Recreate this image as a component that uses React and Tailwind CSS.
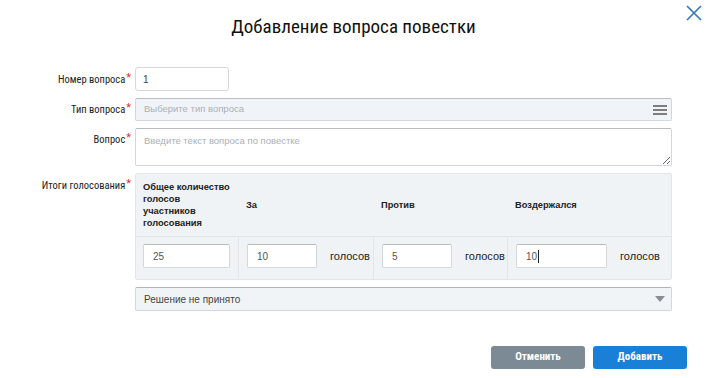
import React from "react";

const narrow = { fontFamily: '"Liberation Sans Narrow", "Roboto Condensed", Roboto, sans-serif' };

function Label({ children, className = "" }) {
  return (
    <div className={"flex justify-end pr-[4px] text-[10.5px] leading-[13px] text-[#222] " + className} style={narrow}>
      <span>{children}</span>
      <span className="text-[#d33] text-[11px] leading-[9px] ml-[1px]">*</span>
    </div>
  );
}

function NumInput({ value, w, cursor }) {
  return (
    <div className={"h-[24px] bg-white border border-[#d5d8db] border-t-[#b9bcbf] rounded-[2px] flex items-center pl-[9px] text-[10px] text-[#555] " + w} style={{ fontFamily: '"Liberation Sans", Arial, sans-serif' }}>
      {value}
      {cursor && <span className="inline-block w-[1px] h-[13px] bg-[#222] ml-[1px]" />}
    </div>
  );
}

export default function App() {
  const arial = { fontFamily: '"Liberation Sans", Arial, sans-serif' };
  return (
    <div className="w-[707px] h-[378px] bg-white relative overflow-hidden" style={arial}>
      <button className="absolute right-[5px] top-[5px] w-[16px] h-[16px]">
        <svg width="16" height="16" viewBox="0 0 16 16">
          <path d="M1 1 L15 15 M15 1 L1 15" stroke="#3a7bb6" strokeWidth="1.7" fill="none" />
        </svg>
      </button>

      <h1 className="text-center pt-[14px] h-[67px] text-[19px] leading-[26px] text-[#111]" style={narrow}>
        Добавление вопроса повестки
      </h1>

      <div className="grid grid-cols-[135px_1fr] gap-y-[7px] pr-[35px]">
        <Label className="pt-[6px]">Номер вопроса</Label>
        <div>
          <div className="w-[94px] h-[24px] border border-[#d5d8db] rounded-[3px] flex items-center pl-[7px] text-[10px] text-[#444]">1</div>
        </div>

        <Label className="pt-[5px]">Тип вопроса</Label>
        <div className="h-[23px] bg-[#f0f4f8] border border-[#d3d7db] border-t-[#b8bcc0] rounded-[2px] flex items-center justify-between pl-[8px] pr-[4px]">
          <span className="text-[9.5px] text-[#aab0b6]">Выберите тип вопроса</span>
          <svg width="14" height="12" viewBox="0 0 14 12">
            <rect x="0" y="1" width="14" height="2" fill="#7d7d7d" />
            <rect x="0" y="5" width="14" height="2" fill="#7d7d7d" />
            <rect x="0" y="9" width="14" height="2" fill="#7d7d7d" />
          </svg>
        </div>

        <Label className="pt-[5px]">Вопрос</Label>
        <textarea
          className="h-[38px] block w-full border border-[#d3d7db] border-t-[#b8bcc0] rounded-[2px] px-[8px] pt-[5px] text-[9.5px] placeholder:text-[#aab0b6] resize-y outline-none"
          placeholder="Введите текст вопроса по повестке"
        />

        <Label className="pt-[6px]">Итоги голосования</Label>
        <div className="bg-[#eff3f6] border border-[#e2e6ea] rounded-[2px]">
          <div className="grid grid-cols-[102px_135px_134px_1fr] h-[62px] items-center text-[9.3px] leading-[12px] font-bold text-[#222]">
            <div className="pl-[7px]">Общее количество<br />голосов<br />участников<br />голосования</div>
            <div className="pl-[8px]">За</div>
            <div className="pl-[8px]">Против</div>
            <div className="pl-[8px]">Воздержался</div>
          </div>
          <div className="grid grid-cols-[102px_135px_134px_1fr] h-[43px] border-t border-[#e2e6ea] text-[11px] text-[#222]">
            <div className="flex items-start pt-[7px] pl-[7px]">
              <NumInput value="25" w="w-[87px]" />
            </div>
            <div className="flex items-start pt-[7px] pl-[8px] border-l border-[#e2e6ea] gap-[13px]">
              <NumInput value="10" w="w-[70px]" />
              <span className="leading-[24px]">голосов</span>
            </div>
            <div className="flex items-start pt-[7px] pl-[8px] border-l border-[#e2e6ea] gap-[13px]">
              <NumInput value="5" w="w-[70px]" />
              <span className="leading-[24px]">голосов</span>
            </div>
            <div className="flex items-start pt-[7px] pl-[8px] border-l border-[#e2e6ea] gap-[13px]">
              <NumInput value="10" w="w-[91px]" cursor />
              <span className="leading-[24px]">голосов</span>
            </div>
          </div>
        </div>

        <div />
        <div className="h-[24px] bg-[#f1f4f7] border border-[#d3d7db] border-t-[#b0b4b8] rounded-[2px] flex items-center justify-between pl-[8px] pr-[6px]">
          <span className="text-[10px] text-[#444]">Решение не принято</span>
          <svg width="10" height="7" viewBox="0 0 10 7">
            <path d="M0 0 L10 0 L5 6 Z" fill="#8a8f94" />
          </svg>
        </div>
      </div>

      <div className="flex justify-end gap-[8px] pr-[20px] mt-[35px]">
        <button className="w-[94px] h-[23px] rounded-[3px] bg-[#7c8a95] text-white text-[11px] font-bold" style={narrow}>Отменить</button>
        <button className="w-[94px] h-[23px] rounded-[3px] bg-[#1a7fd6] text-white text-[11px] font-bold" style={narrow}>Добавить</button>
      </div>
    </div>
  );
}
